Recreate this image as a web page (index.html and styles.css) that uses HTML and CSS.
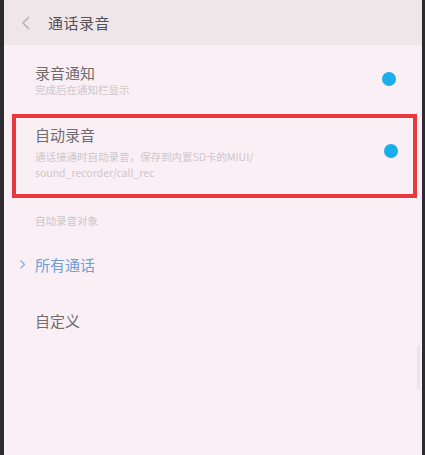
FILE: index.html
```html
<!DOCTYPE html>
<html lang="zh">
<head>
<meta charset="utf-8">
<link rel="stylesheet" href="styles.css">
</head>
<body>
<div class="screen">
  <header class="topbar">
    <svg class="back" width="10" height="16" viewBox="0 0 10 16"><path d="M8 2 L2 8 L8 14" fill="none" stroke="#b9b2b6" stroke-width="1.6"/></svg>
    <span class="title">通话录音</span>
  </header>
  <div class="row row-notify">
    <div class="texts">
      <div class="main">录音通知</div>
      <div class="sub">完成后在通知栏显示</div>
    </div>
    <span class="dot"></span>
  </div>
  <div class="row row-auto">
    <div class="texts">
      <div class="main">自动录音</div>
      <div class="sub">通话接通时自动录音，保存到内置SD卡的MIUI/<br>sound_recorder/call_rec</div>
    </div>
    <span class="dot"></span>
  </div>
  <div class="section">自动录音对象</div>
  <div class="option selected">
    <svg class="chev" width="7" height="11" viewBox="0 0 7 11"><path d="M1.5 1.5 L5.5 5.5 L1.5 9.5" fill="none" stroke="#8fb3dc" stroke-width="1.4"/></svg>
    <span>所有通话</span>
  </div>
  <div class="option">
    <span>自定义</span>
  </div>
  <div class="scroll"></div>
</div>
</body>
</html>
```
FILE: styles.css
```css
html, body {
  margin: 0;
  padding: 0;
  background: #f8eef3;
}
.screen {
  position: relative;
  width: 425px;
  height: 455px;
  box-sizing: border-box;
  border-left: 4px solid #2c2b30;
  border-right: 3px solid #2c2b30;
  background: #f9eff4;
  font-family: "Noto Sans CJK SC", "Noto Sans", sans-serif;
  overflow: hidden;
}
.topbar {
  height: 45px;
  background: #efe6ea;
  display: flex;
  align-items: center;
  padding-left: 17px;
  gap: 17px;
}
.title {
  font-size: 15px;
  color: #555054;
  letter-spacing: 0.5px;
}
.row {
  display: flex;
  align-items: center;
  justify-content: space-between;
  padding: 0 26px 0 31px;
}
.row-notify {
  height: 68px;
}
.row-notify .texts {
  margin-top: 3px;
}
.row-notify .sub {
  margin-top: -1px;
}
.row-auto {
  margin: 1px 5px 0 8px;
  height: 76px;
  border: 4px solid #e8393f;
  padding: 0 15px 0 19px;
}
.row-auto .texts {
  margin-top: -6px;
}
.row-auto .dot {
  margin-top: -10px;
}
.main {
  font-size: 15px;
  color: #716b6e;
  line-height: 20px;
}
.sub {
  font-size: 10.5px;
  color: #cfc7cb;
  line-height: 16px;
  margin-top: 2px;
}
.row-auto .sub {
  margin-top: 4px;
}
.dot {
  width: 14px;
  height: 14px;
  border-radius: 50%;
  background: #19ade9;
  flex: none;
}
.section {
  font-size: 10.5px;
  color: #cdc5c9;
  padding-left: 31px;
  margin-top: 15px;
  line-height: 16px;
}
.option {
  height: 56px;
  display: flex;
  align-items: center;
  padding-left: 31px;
  font-size: 15px;
  color: #716b6e;
  position: relative;
}
.option.selected {
  margin-top: 7px;
  color: #6f9fd6;
}
.chev {
  position: absolute;
  left: 15px;
  top: 23px;
}
.scroll {
  position: absolute;
  right: 2px;
  top: 345px;
  width: 3px;
  height: 45px;
  background: #ebe4e8;
  border-radius: 2px;
}
```
